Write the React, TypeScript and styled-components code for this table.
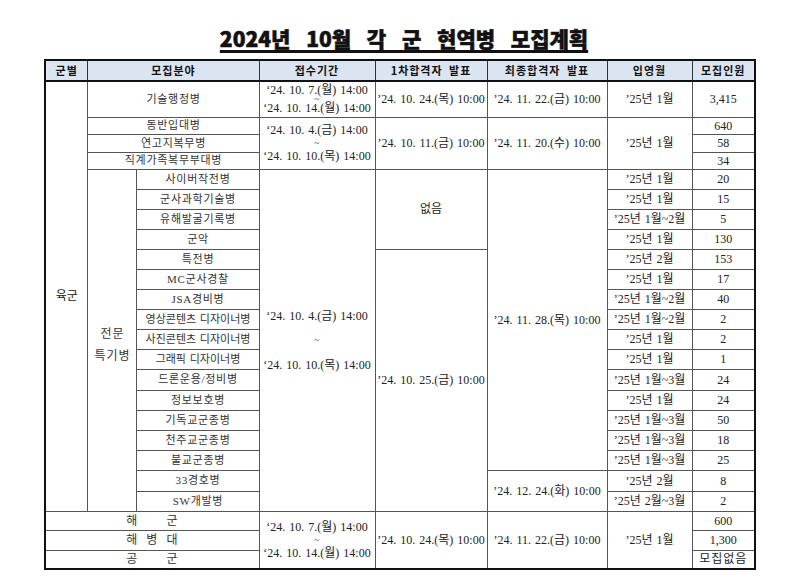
import React from "react";
import styled, { createGlobalStyle } from "styled-components";

interface Special {
  name: string;
  month: string;
  count: string;
  tight?: boolean;
}

const specials: Special[] = [
  { name: "사이버작전병", month: "’25년 1월", count: "20" },
  { name: "군사과학기술병", month: "’25년 1월", count: "15" },
  { name: "유해발굴기록병", month: "’25년 1월~2월", count: "5" },
  { name: "군악", month: "’25년 1월", count: "130" },
  { name: "특전병", month: "’25년 2월", count: "153" },
  { name: "MC군사경찰", month: "’25년 1월", count: "17" },
  { name: "JSA경비병", month: "’25년 1월~2월", count: "40" },
  { name: "영상콘텐츠 디자이너병", month: "’25년 1월~2월", count: "2", tight: true },
  { name: "사진콘텐츠 디자이너병", month: "’25년 1월", count: "2", tight: true },
  { name: "그래픽 디자이너병", month: "’25년 1월", count: "1", tight: true },
  { name: "드론운용/정비병", month: "’25년 1월~3월", count: "24" },
  { name: "정보보호병", month: "’25년 1월", count: "24" },
  { name: "기독교군종병", month: "’25년 1월~3월", count: "50" },
  { name: "천주교군종병", month: "’25년 1월~3월", count: "18" },
  { name: "불교군종병", month: "’25년 1월~3월", count: "25" },
  { name: "33경호병", month: "’25년 2월", count: "8" },
  { name: "SW개발병", month: "’25년 2월~3월", count: "2" },
];

// row heights picked off the screenshot
const specialHeights = [20, 20, 20, 20, 20, 20, 20, 20, 20, 20, 21, 20, 20, 20, 20, 21, 20];

const Range = ({
  from,
  to,
  gap,
  line = 14,
}: {
  from: string;
  to: string;
  gap: number;
  line?: number;
}) => (
  <RangeBox>
    <DateLine $line={line}>{from}</DateLine>
    <Tilde $h={gap}>~</Tilde>
    <DateLine $line={line}>{to}</DateLine>
  </RangeBox>
);

const Spread = ({ text }: { text: string }) => (
  <SpreadBox>
    {text.split("").map((c, i) => (
      <span key={i}>{c}</span>
    ))}
  </SpreadBox>
);

const App = () => {
  return (
    <Page>
      <GlobalStyle />
      <Title>2024년 10월 각 군 현역병 모집계획</Title>
      <Table>
        <colgroup>
          <col style={{ width: 43 }} />
          <col style={{ width: 49 }} />
          <col style={{ width: 122 }} />
          <col style={{ width: 116 }} />
          <col style={{ width: 112 }} />
          <col style={{ width: 120 }} />
          <col style={{ width: 85 }} />
          <col style={{ width: 63 }} />
        </colgroup>
        <thead>
          <Row $h={21}>
            <Head>군별</Head>
            <Head colSpan={2}>모집분야</Head>
            <Head>접수기간</Head>
            <Head>1차합격자 발표</Head>
            <Head>최종합격자 발표</Head>
            <Head>입영월</Head>
            <Head>모집인원</Head>
          </Row>
        </thead>
        <tbody>
          <Row $h={36}>
            <Cell rowSpan={21}>육군</Cell>
            <Field colSpan={2}>기술행정병</Field>
            <Cell>
              <Range
                from="‘24. 10. 7.(월) 14:00"
                to="‘24. 10. 14.(월) 14:00"
                gap={6}
                line={12}
              />
            </Cell>
            <Cell>’24. 10. 24.(목) 10:00</Cell>
            <Cell>’24. 11. 22.(금) 10:00</Cell>
            <Cell>’25년 1월</Cell>
            <Cell>3,415</Cell>
          </Row>
          <Row $h={17}>
            <Field colSpan={2}>동반입대병</Field>
            <Cell rowSpan={3}>
              <Range from="‘24. 10. 4.(금) 14:00" to="‘24. 10. 10.(목) 14:00" gap={12} />
            </Cell>
            <Cell rowSpan={3}>’24. 10. 11.(금) 10:00</Cell>
            <Cell rowSpan={3}>’24. 11. 20.(수) 10:00</Cell>
            <Cell rowSpan={3}>’25년 1월</Cell>
            <Cell>640</Cell>
          </Row>
          <Row $h={18}>
            <Field colSpan={2}>연고지복무병</Field>
            <Cell>58</Cell>
          </Row>
          <Row $h={17}>
            <Field colSpan={2}>직계가족복무부대병</Field>
            <Cell>34</Cell>
          </Row>
          {specials.map((s, i) => (
            <Row key={s.name} $h={specialHeights[i]}>
              {i === 0 && (
                <Cell rowSpan={17}>
                  <Stacked>
                    <span>전문</span>
                    <span>특기병</span>
                  </Stacked>
                </Cell>
              )}
              <Field $tight={s.tight}>{s.name}</Field>
              {i === 0 && (
                <Cell rowSpan={17}>
                  <Range from="‘24. 10. 4.(금) 14:00" to="‘24. 10. 10.(목) 14:00" gap={35} />
                </Cell>
              )}
              {i === 0 && <Cell rowSpan={4}>없음</Cell>}
              {i === 0 && <Cell rowSpan={15}>’24. 11. 28.(목) 10:00</Cell>}
              {i === 4 && <Cell rowSpan={13}>’24. 10. 25.(금) 10:00</Cell>}
              {i === 15 && <Cell rowSpan={2}>’24. 12. 24.(화) 10:00</Cell>}
              <Cell>{s.month}</Cell>
              <Cell>{s.count}</Cell>
            </Row>
          ))}
          <Row $h={19}>
            <Field colSpan={3}>
              <Spread text="해군" />
            </Field>
            <Cell rowSpan={3}>
              <Range from="‘24. 10. 7.(월) 14:00" to="‘24. 10. 14.(월) 14:00" gap={12} />
            </Cell>
            <Cell rowSpan={3}>’24. 10. 24.(목) 10:00</Cell>
            <Cell rowSpan={3}>’24. 11. 22.(금) 10:00</Cell>
            <Cell rowSpan={3}>’25년 1월</Cell>
            <Cell>600</Cell>
          </Row>
          <Row $h={20}>
            <Field colSpan={3}>
              <Spread text="해병대" />
            </Field>
            <Cell>1,300</Cell>
          </Row>
          <Row $h={19}>
            <Field colSpan={3}>
              <Spread text="공군" />
            </Field>
            <Cell $spaced>모집없음</Cell>
          </Row>
        </tbody>
      </Table>
    </Page>
  );
};

const GlobalStyle = createGlobalStyle`
  body {
    margin: 0;
    background: #fff;
    color: #222;
    font-family: "Liberation Serif", "Noto Sans CJK KR", serif;
  }
`;

const Page = styled.div`
  width: 800px;
  padding-top: 26px;
`;

const Title = styled.h1`
  margin: 0 0 9px;
  padding-left: 8px;
  text-align: center;
  font-family: "Noto Sans CJK KR", sans-serif;
  font-weight: 900;
  font-size: 21px;
  line-height: 24px;
  word-spacing: 11px;
  color: #111;
  -webkit-text-stroke: 0.6px #111;
  text-decoration: underline;
  text-decoration-thickness: 2.5px;
  text-underline-offset: 3px;
`;

const Table = styled.table`
  margin: 0 auto;
  width: 710px;
  table-layout: fixed;
  border-collapse: collapse;
  border: 2px solid #111;
`;

const Row = styled.tr<{ $h: number }>`
  height: ${({ $h }) => $h}px;
`;

const Head = styled.th`
  padding: 0;
  background: #dbe5f1;
  border: 1px solid #333;
  border-bottom: 2px solid #111;
  font-family: "Noto Sans CJK KR", sans-serif;
  font-weight: 700;
  font-size: 11px;
  letter-spacing: 1px;
  word-spacing: 3px;
  line-height: 1;
  color: #111;
  text-align: center;
  vertical-align: middle;
`;

const Cell = styled.td<{ $spaced?: boolean }>`
  padding: 0;
  border: 1px solid #555;
  font-size: 12px;
  line-height: 1;
  word-spacing: ${({ $spaced }) => ($spaced ? "0" : "1px")};
  letter-spacing: ${({ $spaced }) => ($spaced ? "1px" : "0")};
  white-space: nowrap;
  text-align: center;
  vertical-align: middle;
`;

const Field = styled(Cell)<{ $tight?: boolean }>`
  font-size: 11px;
  letter-spacing: ${({ $tight }) => ($tight ? "0" : "0.7px")};
  word-spacing: ${({ $tight }) => ($tight ? "1px" : "0")};
  color: #333;
`;

const RangeBox = styled.div`
  display: flex;
  flex-direction: column;
  align-items: center;
`;

const DateLine = styled.span<{ $line: number }>`
  display: block;
  height: ${({ $line }) => $line}px;
  line-height: ${({ $line }) => $line}px;
`;

const Tilde = styled.span<{ $h: number }>`
  display: flex;
  align-items: center;
  justify-content: center;
  height: ${({ $h }) => $h}px;
  font-size: 9px;
  line-height: 0;
`;

const Stacked = styled.div`
  display: flex;
  flex-direction: column;
  align-items: center;
  gap: 10px;
  padding-top: 10px;
  font-size: 12px;
  letter-spacing: 1px;
  color: #333;
`;

const SpreadBox = styled.span`
  display: inline-flex;
  justify-content: space-between;
  width: 52px;
  font-size: 12px;
`;

export default App;
